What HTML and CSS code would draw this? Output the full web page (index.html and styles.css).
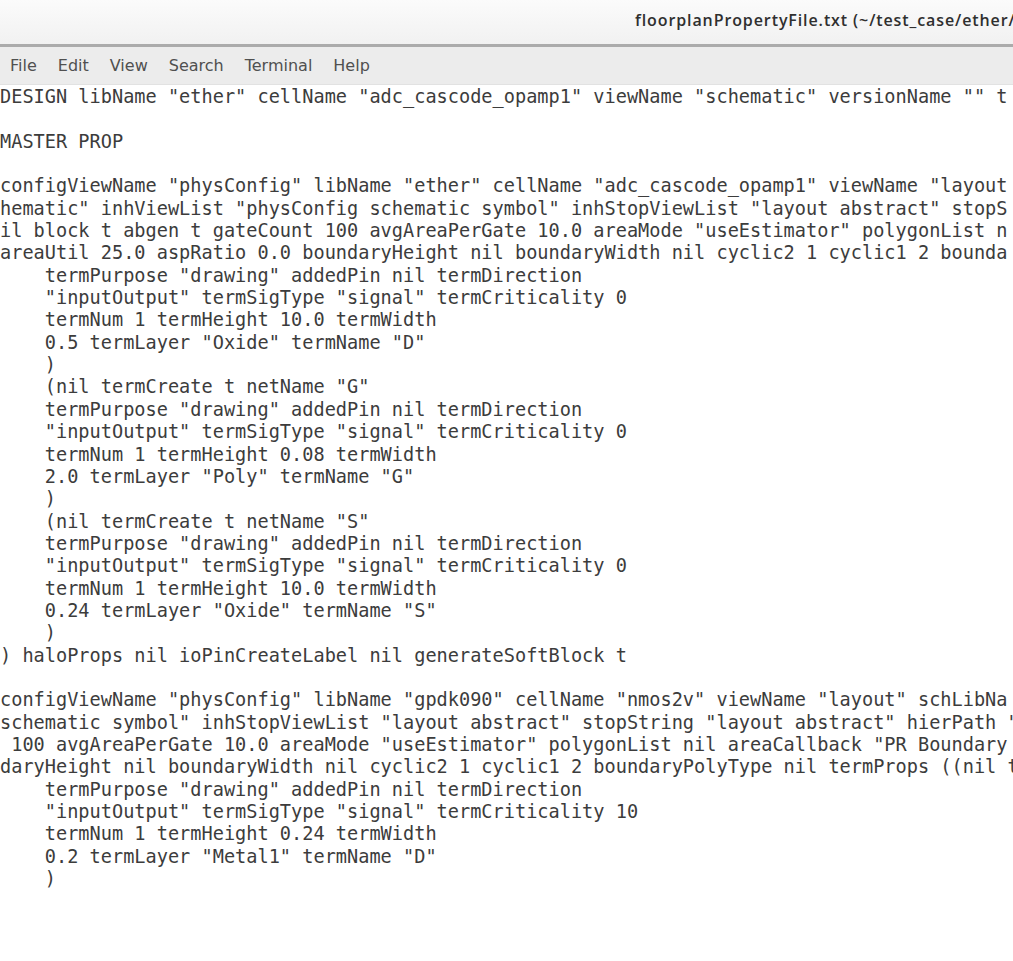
FILE: index.html
```html
<!DOCTYPE html>
<html>
<head>
<meta charset="utf-8">
<title>floorplanPropertyFile.txt</title>
<link rel="stylesheet" href="styles.css">
</head>
<body>
<div class="fenetre">
	<div class="titre">
		<span class="nom">floorplanPropertyFile.txt (~/test_case/ether/</span>
	</div>
	<ul class="menu">
		<li>File</li>
		<li>Edit</li>
		<li>View</li>
		<li>Search</li>
		<li>Terminal</li>
		<li>Help</li>
	</ul>
<pre class="contenu">DESIGN libName "ether" cellName "adc_cascode_opamp1" viewName "schematic" versionName "" t

MASTER PROP

configViewName "physConfig" libName "ether" cellName "adc_cascode_opamp1" viewName "layout
hematic" inhViewList "physConfig schematic symbol" inhStopViewList "layout abstract" stopS
il block t abgen t gateCount 100 avgAreaPerGate 10.0 areaMode "useEstimator" polygonList n
areaUtil 25.0 aspRatio 0.0 boundaryHeight nil boundaryWidth nil cyclic2 1 cyclic1 2 bounda
    termPurpose "drawing" addedPin nil termDirection
    "inputOutput" termSigType "signal" termCriticality 0
    termNum 1 termHeight 10.0 termWidth
    0.5 termLayer "Oxide" termName "D"
    )
    (nil termCreate t netName "G"
    termPurpose "drawing" addedPin nil termDirection
    "inputOutput" termSigType "signal" termCriticality 0
    termNum 1 termHeight 0.08 termWidth
    2.0 termLayer "Poly" termName "G"
    )
    (nil termCreate t netName "S"
    termPurpose "drawing" addedPin nil termDirection
    "inputOutput" termSigType "signal" termCriticality 0
    termNum 1 termHeight 10.0 termWidth
    0.24 termLayer "Oxide" termName "S"
    )
) haloProps nil ioPinCreateLabel nil generateSoftBlock t

configViewName "physConfig" libName "gpdk090" cellName "nmos2v" viewName "layout" schLibNa
schematic symbol" inhStopViewList "layout abstract" stopString "layout abstract" hierPath "
 100 avgAreaPerGate 10.0 areaMode "useEstimator" polygonList nil areaCallback "PR Boundary
daryHeight nil boundaryWidth nil cyclic2 1 cyclic1 2 boundaryPolyType nil termProps ((nil t
    termPurpose "drawing" addedPin nil termDirection
    "inputOutput" termSigType "signal" termCriticality 10
    termNum 1 termHeight 0.24 termWidth
    0.2 termLayer "Metal1" termName "D"
    )
</pre>
</div>
</body>
</html>
```

FILE: styles.css
```css
html,body,ul,li,pre {
	margin:0;
	padding:0;
}
body {
	background:#fff;
	overflow:hidden;
	width:1013px;
	height:961px;
}
.fenetre {
	width:1013px;
	overflow:hidden;
}
.titre {
	height:44px;
	background:linear-gradient(#fbfbfb, #f1f1f1);
	border-bottom:3px solid #ababab;
	padding-left:635px;
	white-space:nowrap;
	overflow:hidden;
}
.nom {
	display:block;
	font-family:"Open Sans", sans-serif;
	font-weight:600;
	font-size:16px;
	line-height:40px;
	color:#2f2f2f;
	letter-spacing:0.9px;
}
.menu {
	list-style:none;
	display:flex;
	gap:21px;
	height:37px;
	padding-left:10px;
	background:#ececec;
	border-bottom:1px solid #e2e2e2;
	font-family:"DejaVu Sans", sans-serif;
	font-size:16px;
	line-height:38px;
	color:#505050;
}
.contenu {
	font-family:"DejaVu Sans Mono", monospace;
	font-size:18.6px;
	line-height:22.34px;
	color:#3c3c3c;
	white-space:pre;
	overflow:hidden;
	padding-top:1px;
}
```
